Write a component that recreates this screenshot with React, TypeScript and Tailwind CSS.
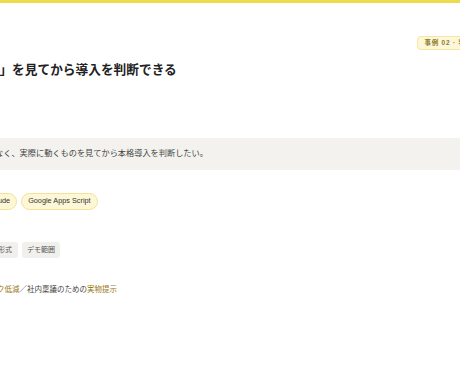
export default function App() {
  const jp = "font-['Liberation_Sans','Noto_Sans_CJK_JP',sans-serif]"
  return (
    <div className={`w-[460px] h-[380px] overflow-hidden bg-white border-t-[3px] border-[#efd94c] ${jp}`}>
      <div className="flex justify-end pt-[33px]">
        <div className="-mr-[20px] h-[14px] flex items-center rounded-[4px] border border-[#f4e7a6] bg-[#fdf7d8] px-[6px] text-[6.5px] font-bold tracking-[0.12em] text-[#8c7a2c] whitespace-nowrap">
          事例 02 · 判断
        </div>
      </div>

      <h1 className="mt-[11px] -ml-[64px] text-[12.7px] font-bold leading-[18px] text-[#222] whitespace-nowrap">
        「動くもの」を見てから導入を判断できる
      </h1>

      <div className="mt-[59px] bg-[#f3f2ee] h-[32px] flex items-center">
        <p className="-ml-[5px] text-[8.2px] text-[#444] whitespace-nowrap">
          なく、実際に動くものを見てから本格導入を判断したい。
        </p>
      </div>

      <div className="mt-[23px] flex gap-[4px] -ml-[23px]">
        <span className="rounded-full border border-[#f1e29b] bg-[#fdf7d6] pl-[9px] pr-[6px] h-[17px] flex items-center text-[7.3px] text-[#333] whitespace-nowrap">
          Claude
        </span>
        <span className="rounded-full border border-[#f1e29b] bg-[#fdf7d6] px-[6px] h-[17px] flex items-center text-[7.3px] text-[#333] whitespace-nowrap">
          Google Apps Script
        </span>
      </div>

      <div className="mt-[32px] flex gap-[4px] -ml-[22px]">
        <span className="rounded-[3px] bg-[#f1f0ec] px-[6px] h-[16px] flex items-center text-[7px] text-[#555] whitespace-nowrap">
          提案形式
        </span>
        <span className="rounded-[3px] bg-[#f1f0ec] px-[5px] h-[16px] flex items-center text-[7px] text-[#555] whitespace-nowrap">
          デモ範囲
        </span>
      </div>

      <p className="mt-[26px] -ml-[18px] text-[7.5px] leading-[12px] text-[#444] whitespace-nowrap">
        <span className="text-[#9c7b18]">リスク低減</span>／社内稟議のための<span className="text-[#9c7b18]">実物提示</span>
      </p>
    </div>
  )
}
